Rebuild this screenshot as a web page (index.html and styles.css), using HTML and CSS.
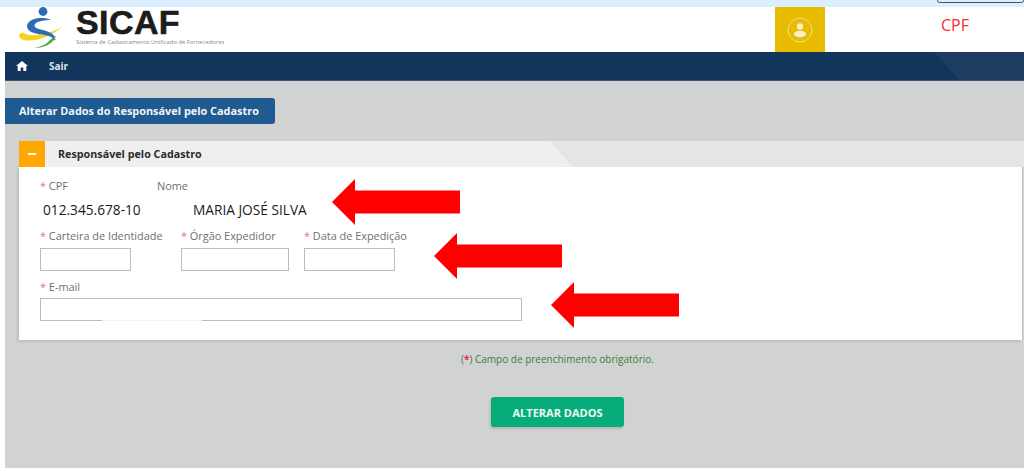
FILE: index.html
```html
<!DOCTYPE html>
<html lang="pt-BR">
<head>
    <meta charset="UTF-8">
    <meta name="viewport" content="width=device-width, initial-scale=1.0">
    <title>SICAF - Alterar Dados</title>
    <link rel="stylesheet" href="styles.css">
</head>
<body>
    <div class="top-strip"><span class="top-tab"></span></div>

    <header class="site-header">
        <div class="brand">
            <svg class="brand-mark" width="46" height="44" viewBox="0 0 46 44">
                <path d="M1 29 C3 37 28 35 45 19 C34 27 13 31 6 26 C4 25 1 26 1 29Z" fill="#f4d21f"/>
                <circle cx="25" cy="4.5" r="4.4" fill="#2a6db5"/>
                <path d="M33 13 C25 9 10 11 9 19 C9 26 20 27 27 28 C32 29 36 31 37 34 C39 28 32 25 25 23 C19 22 15 20 17 17 C19 14 27 13 33 13Z" fill="#2a6db5"/>
                <path d="M16 41 C26 41 35 37 38 29 C36 30 34 31 32 33 C28 38 22 40 16 41Z" fill="#46a83a"/>
            </svg>
            <div class="brand-text">
                <div class="brand-name">SICAF</div>
                <div class="brand-sub">Sistema de Cadastramento Unificado de Fornecedores</div>
            </div>
        </div>
        <div class="user-box">
            <svg width="26" height="26" viewBox="0 0 26 26">
                <circle cx="13" cy="13" r="12" fill="none" stroke="#f2dc8a" stroke-width="1"/>
                <circle cx="13" cy="9.5" r="3.2" fill="#f8efd0"/>
                <ellipse cx="13" cy="17" rx="6" ry="3.2" fill="#f8efd0"/>
            </svg>
        </div>
        <div class="user-cpf">CPF</div>
    </header>

    <div class="page">
        <nav class="main-nav">
            <svg class="home-icon" width="12" height="10" viewBox="0 0 12 10">
                <path d="M6 0 L12 5 H10.3 V10 H7.3 V6.5 H4.7 V10 H1.7 V5 H0Z" fill="#fff"/>
            </svg>
            <a href="#" class="nav-link">Sair</a>
        </nav>

        <main class="content">
            <h2 class="page-title">Alterar Dados do Responsável pelo Cadastro</h2>

            <section class="panel">
                <div class="panel-head">
                    <span class="panel-toggle"><span class="minus"></span></span>
                    <h3>Responsável pelo Cadastro</h3>
                </div>
                <div class="panel-body">
                    <div class="row row-id">
                        <div class="field field-cpf">
                            <label><span class="req">*</span> CPF</label>
                            <div class="value">012.345.678-10</div>
                        </div>
                        <div class="field field-nome">
                            <label>Nome</label>
                            <div class="value">MARIA JOSÉ SILVA</div>
                        </div>
                    </div>
                    <div class="row row-docs">
                        <div class="field field-rg">
                            <label><span class="req">*</span> Carteira de Identidade</label>
                            <input type="text" class="input-rg">
                        </div>
                        <div class="field field-orgao">
                            <label><span class="req">*</span> Órgão Expedidor</label>
                            <input type="text" class="input-orgao">
                        </div>
                        <div class="field">
                            <label><span class="req">*</span> Data de Expedição</label>
                            <input type="text" class="input-data">
                        </div>
                    </div>
                    <div class="field field-email">
                        <label><span class="req">*</span> E-mail</label>
                        <input type="text" class="input-email">
                        <span class="email-smudge"></span>
                    </div>
                </div>
            </section>

            <p class="required-note">(<span class="req-strong">*</span>) Campo de preenchimento obrigatório.</p>

            <div class="actions">
                <button class="btn-save">ALTERAR DADOS</button>
            </div>
        </main>
    </div>

    <!-- setas vermelhas sobre a tela -->
    <svg class="arrow arrow-1" width="128" height="46" viewBox="0 0 128 46"><path d="M0 23 L23 0 V11.5 H128 V34.5 H23 V46Z"/></svg>
    <svg class="arrow arrow-2" width="128" height="46" viewBox="0 0 128 46"><path d="M0 23 L23 0 V11.5 H128 V34.5 H23 V46Z"/></svg>
    <svg class="arrow arrow-3" width="128" height="46" viewBox="0 0 128 46"><path d="M0 23 L23 0 V11.5 H128 V34.5 H23 V46Z"/></svg>
</body>
</html>
```

FILE: styles.css
```css
html, body {
    height: 100%;
}
body {
    margin: 0;
    position: relative;
    overflow: hidden;
    background-color: #fff;
    font-family: "Open Sans", "Noto Sans", sans-serif;
}
.top-strip {
    height: 7px;
    position: relative;
    background-color: #dbeeff;
}
.top-tab {
    position: absolute;
    left: 937px;
    right: 0;
    top: -2px;
    height: 3px;
    border: 1px solid #4a5058;
    border-radius: 3px;
}
.site-header {
    height: 45px;
    display: flex;
    background-color: #fff;
}
.brand {
    display: flex;
    width: 775px;
    padding-left: 18px;
    box-sizing: border-box;
}
.brand-text {
    margin-left: 12px;
}
.brand-name {
    font-family: "Liberation Sans", Arial, sans-serif;
    font-size: 34px;
    line-height: 31px;
    font-weight: bold;
    color: #1c1c1c;
    letter-spacing: 0.4px;
    -webkit-text-stroke: 0.6px #1c1c1c;
}
.brand-sub {
    font-size: 5.85px;
    line-height: 8px;
    color: #8a8a8a;
    white-space: nowrap;
}
.user-box {
    width: 50px;
    height: 45px;
    background-color: #e6bb00;
    display: flex;
    align-items: center;
    justify-content: center;
}
.user-cpf {
    margin-left: 116px;
    margin-top: 8px;
    font-size: 16px;
    line-height: 20px;
    color: #fb2a2a;
}
.page {
    margin-left: 5px;
    height: 416px;
    background-color: #d1d3d2;
}
.main-nav {
    height: 29px;
    position: relative;
    display: flex;
    align-items: center;
    background-color: #12355b;
    padding-left: 11px;
    box-sizing: border-box;
    border-bottom: 1px solid #3d5570;
}
.main-nav::after {
    content: "";
    position: absolute;
    left: 928px;
    right: 0;
    top: 0;
    bottom: 0;
    background-color: #1c3c60;
    clip-path: polygon(0 0, 100% 0, 100% 100%, 27px 100%);
}
.home-icon {
    margin-right: 21px;
}
.nav-link {
    color: #dfe5ec;
    font-size: 10px;
    font-weight: 700;
    text-decoration: none;
}
.content {
    padding-top: 17px;
}
.page-title {
    margin: 0;
    width: 270px;
    height: 26px;
    box-sizing: border-box;
    padding-left: 14px;
    line-height: 26px;
    font-size: 10.9px;
    font-weight: 700;
    color: #f2f5f8;
    background-color: #1f5a90;
    border-radius: 0 3px 3px 0;
    white-space: nowrap;
}
.panel {
    margin: 17px 0 0 14px;
}
.panel-head {
    height: 26px;
    position: relative;
    display: flex;
    align-items: center;
    background-color: #efefef;
}
.panel-head::after {
    content: "";
    position: absolute;
    left: 531px;
    right: 0;
    top: 0;
    bottom: 0;
    background-color: #e5e5e5;
    clip-path: polygon(0 0, 100% 0, 100% 100%, 23px 100%);
}
.panel-toggle {
    width: 26px;
    height: 26px;
    background-color: #ffa800;
    display: flex;
    align-items: center;
    justify-content: center;
}
.minus {
    width: 8px;
    height: 2px;
    background-color: #fff;
}
.panel-head h3 {
    margin: 0 0 0 13px;
    font-size: 10.75px;
    font-weight: 700;
    color: #2b2b2b;
}
.panel-body {
    width: 1003px;
    height: 173px;
    box-sizing: border-box;
    padding: 12px 21px 0;
    background-color: #fff;
    box-shadow: -2px 2px 2px #bfc0bf, 1px 0 0 #bfc0bf;
}
.row {
    display: flex;
}
.row-id {
    height: 50px;
}
.row-docs {
    height: 51px;
}
.field {
    display: flex;
    flex-direction: column;
}
.field-cpf {
    width: 117px;
}
.field-rg {
    width: 141px;
}
.field-orgao {
    width: 123px;
}
.field-email {
    position: relative;
}
.field label {
    font-size: 10.9px;
    line-height: 14px;
    color: #6f6f6f;
    white-space: nowrap;
}
.req {
    color: #e2708a;
}
.value {
    font-size: 13.7px;
    line-height: 18px;
    color: #1a1a1a;
    margin-top: 8px;
    white-space: nowrap;
}
.field-cpf .value {
    margin-left: 3px;
}
.field-nome .value {
    margin-left: 36px;
}
input {
    box-sizing: border-box;
    height: 23px;
    margin-top: 4px;
    border: 1px solid #bdbdbd;
    background-color: #fff;
    padding: 0;
}
.row-docs input {
    margin-top: 5px;
}
.input-rg {
    width: 91px;
}
.input-orgao {
    width: 108px;
}
.input-data {
    width: 91px;
}
.input-email {
    width: 482px;
}
.email-smudge {
    position: absolute;
    left: 62px;
    bottom: 0;
    width: 100px;
    height: 1px;
    background-color: #f2f2f2;
}
.required-note {
    margin: 13px 0 0;
    padding-left: 456px;
    font-size: 10px;
    line-height: 13px;
    color: #3f7d3a;
}
.req-strong {
    color: #d8324e;
    font-weight: 700;
}
.actions {
    margin-top: 31px;
    padding-left: 486px;
}
.btn-save {
    width: 133px;
    height: 30px;
    border: none;
    border-radius: 3px;
    background-color: #06ad7a;
    color: #eef8f4;
    font-family: "Open Sans", sans-serif;
    font-size: 11px;
    font-weight: 700;
    box-shadow: -1px 2px 2px #b4b5b4;
}
.arrow {
    position: absolute;
    fill: #fe0000;
}
.arrow-1 {
    left: 332px;
    top: 179px;
}
.arrow-2 {
    left: 434px;
    top: 233px;
}
.arrow-3 {
    left: 551px;
    top: 282px;
}
```
